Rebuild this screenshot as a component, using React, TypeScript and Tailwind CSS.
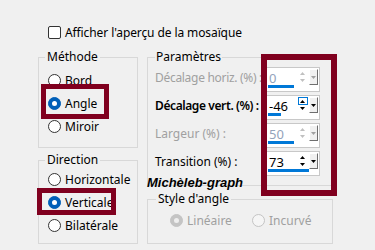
import React from 'react';

const RED = 'border-[#80001f]';

function Radio({ label, checked, disabled }: { label: string; checked?: boolean; disabled?: boolean }) {
  let circle = 'border-[#333333] bg-white';
  if (checked && !disabled) circle = 'border-[#005fb8] bg-[#005fb8]';
  if (checked && disabled) circle = 'border-[#c4c4c4] bg-[#c4c4c4]';
  if (!checked && disabled) circle = 'border-[#c4c4c4] bg-[#f5f5f5]';
  return (
    <div className="flex h-[23px] items-center gap-[4px]">
      <span className={`flex h-[13px] w-[13px] items-center justify-center rounded-full border ${circle}`}>
        {checked && <span className={`h-[5px] w-[5px] rounded-full ${disabled ? 'bg-[#eeeeee]' : 'bg-white'}`} />}
      </span>
      <span className={disabled ? 'text-[#a0a0a0]' : 'text-black'}>{label}</span>
    </div>
  );
}

function Tri({ up, color }: { up?: boolean; color: string }) {
  return (
    <svg width="5" height="3" viewBox="0 0 5 3">
      <polygon points={up ? '2.5,0 5,3 0,3' : '0,0 5,0 2.5,3'} fill={color} />
    </svg>
  );
}

function Spin({ value, disabled, bar, hot }: { value: string; disabled?: boolean; bar: number; hot?: boolean }) {
  const arrow = disabled ? '#c0c0c0' : '#000000';
  return (
    <div className="relative flex h-[25px] w-[54px] shrink-0 border border-[#c8c8c8] bg-white">
      <span className={`w-[30px] pl-[2px] pt-[2px] text-[13px] leading-[16px] ${disabled ? 'text-[#93a3bb]' : 'text-black'}`}>
        {value}
      </span>
      <div className="flex w-[11px] flex-col items-center pt-[1px]">
        <span className={`flex h-[8px] w-[10px] items-center justify-center border ${hot ? 'border-[#0078d7]' : 'border-transparent'}`}>
          <Tri up color={arrow} />
        </span>
        <span className="flex h-[7px] w-[10px] items-center justify-center">
          <Tri color={arrow} />
        </span>
      </div>
      <div className="ml-[1px] mt-[1px] flex h-[16px] w-[9px] items-center justify-center border border-l-white border-t-white border-r-[#6e6e6e] border-b-[#6e6e6e] bg-[#f0f0f0]">
        <Tri color={disabled ? '#a0a0a0' : '#000000'} />
      </div>
      <span className="absolute bottom-[3px] left-[1px] h-[3px] bg-[#0078d7]" style={{ width: bar }} />
    </div>
  );
}

function Row({ label, labelClass, children }: { label: string; labelClass: string; children: React.ReactNode }) {
  return (
    <div className="flex h-[25px] items-start">
      <span className={`w-[111px] shrink-0 whitespace-nowrap pt-[3px] leading-[16px] ${labelClass}`}>{label}</span>
      {children}
    </div>
  );
}

export default function App() {
  return (
    <div className="relative h-[250px] w-[375px] overflow-hidden bg-[#f0f0f0] pt-[24px] font-['Noto_Sans',sans-serif] text-[12px] text-black">
      {/* Checkbox */}
      <div className="flex h-[17px] items-center gap-[4px] pl-[48px]">
        <span className="h-[13px] w-[13px] rounded-[2px] border border-[#333333] bg-white" />
        <span className="tracking-[-0.1px]">Afficher l'aperçu de la mosaïque</span>
      </div>

      <div className="mt-[8px] flex gap-[9px] pl-[38px]">
        {/* Left column */}
        <div className="flex w-[100px] flex-col gap-[4px]">
          <fieldset className="h-[99px] border border-[#d8d8d8] pl-[9px] pt-[4px]">
            <legend className="ml-[-3px] px-[2px] leading-[16px]">Méthode</legend>
            <Radio label="Bord" />
            <Radio label="Angle" checked />
            <Radio label="Miroir" />
          </fieldset>
          <fieldset className="h-[92px] border border-[#d8d8d8] pl-[9px]">
            <legend className="ml-[-3px] px-[2px] leading-[16px]">Direction</legend>
            <Radio label="Horizontale" />
            <Radio label="Verticale" checked />
            <Radio label="Bilatérale" />
          </fieldset>
        </div>

        {/* Right column */}
        <div className="flex w-[186px] flex-col gap-[5px]">
          <fieldset className="flex h-[137px] flex-col gap-[3px] border border-[#d8d8d8] pl-[7px] pt-[2px]">
            <legend className="ml-[0px] px-[1px] leading-[16px]">Paramètres</legend>
            <Row label="Décalage horiz. (%) :" labelClass="tracking-[-0.3px] text-[#a0a0a0]">
              <Spin value="0" disabled bar={26} />
            </Row>
            <Row label="Décalage vert. (%) :" labelClass="font-semibold tracking-[-0.4px] text-black">
              <Spin value="-46" bar={13} hot />
            </Row>
            <Row label="Largeur (%) :" labelClass="text-[#a0a0a0]">
              <Spin value="50" disabled bar={26} />
            </Row>
            <Row label="Transition (%) :" labelClass="text-black">
              <Spin value="73" bar={41} />
            </Row>
          </fieldset>
          <fieldset className="flex h-[53px] border border-[#d8d8d8] pl-[22px] pt-[2px]">
            <legend className="ml-[-14px] px-[2px] leading-[16px]">Style d'angle</legend>
            <div className="w-[82px]">
              <Radio label="Linéaire" checked disabled />
            </div>
            <Radio label="Incurvé" disabled />
          </fieldset>
        </div>
      </div>

      {/* Watermark */}
      <span className="absolute left-[147px] top-[175px] font-['Liberation_Sans',sans-serif] text-[13px] font-bold italic leading-[16px] text-black">
        Michèleb-graph
      </span>

      {/* Annotation boxes */}
      <div className={`absolute left-[41px] top-[84px] h-[35px] w-[68px] border-[5px] ${RED}`} />
      <div className={`absolute left-[37px] top-[188px] h-[27px] w-[79px] border-[5px] ${RED}`} />
      <div className={`absolute left-[261px] top-[54px] h-[142px] w-[76px] border-[6px] ${RED}`} />
    </div>
  );
}
